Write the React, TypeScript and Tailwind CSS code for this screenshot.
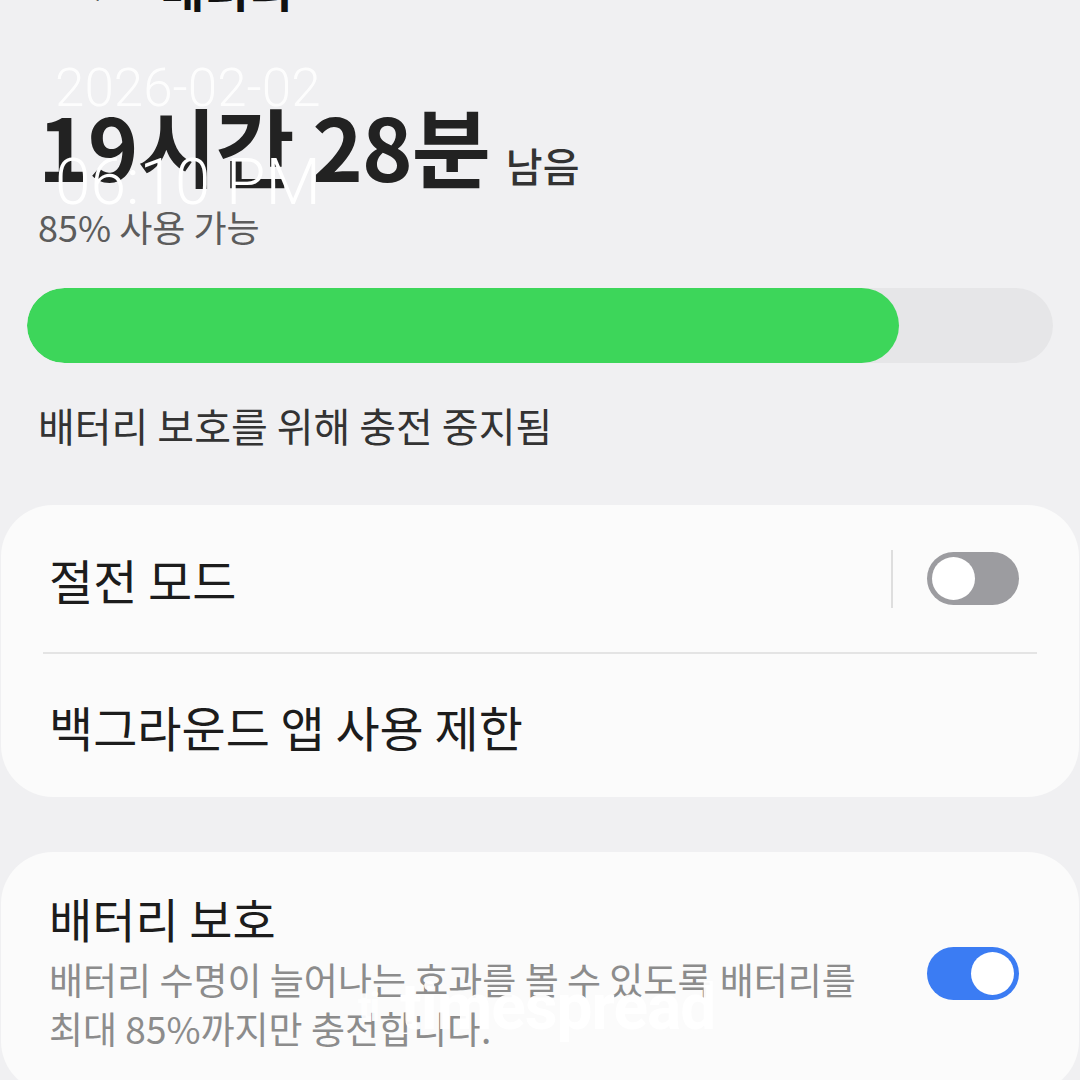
const KR = "font-['Noto_Sans_CJK_KR','Noto_Sans',sans-serif]";

function Toggle({ on }: { on: boolean }) {
  return (
    <div
      className={
        "w-[92px] h-[53px] rounded-full flex items-center px-[5px] " +
        (on ? "bg-[#3b7cf3] justify-end" : "bg-[#9c9ca0] justify-start")
      }
    >
      <div className="w-[43px] h-[43px] rounded-full bg-white" />
    </div>
  );
}

export default function App() {
  return (
    <div className={`relative w-[1080px] h-[1080px] overflow-hidden bg-[#f0f0f2] ${KR}`}>
      {/* header, mostly scrolled off the top */}
      <div className="-mt-[52px] h-[62px] flex items-end pl-[72px] gap-[60px] text-[48px] leading-none text-[#111]">
        <span className="font-bold">&lt;</span>
        <span className="font-bold">배터리</span>
      </div>

      <div className="px-[38px] pt-[92px]">
        <div className="flex items-baseline gap-[16px]">
          <span className="text-[86px] font-bold leading-none tracking-[-1px] text-[#222]">19시간 28분</span>
          <span className="text-[40px] font-medium leading-none text-[#333]">남음</span>
        </div>
        <div className="mt-[20px] text-[36px] leading-none text-[#5c5c5c]">85% 사용 가능</div>
      </div>

      <div className="mx-[27px] mt-[44px] h-[75px] rounded-full bg-[#e6e6e8] overflow-hidden">
        <div className="h-full w-[85%] rounded-full bg-[#3dd65a]" />
      </div>

      <div className="px-[38px] mt-[42px] text-[40px] leading-none text-[#333]">배터리 보호를 위해 충전 중지됨</div>

      <div className="mt-[60px] mx-[1px] rounded-[52px] bg-[#fbfbfb]">
        <div className="flex items-center h-[147px] pl-[48px] pr-[60px]">
          <span className="flex-1 text-[48px] leading-none text-[#1c1c1c]">절전 모드</span>
          <div className="w-[2px] h-[58px] bg-[#dedede] mr-[34px]" />
          <Toggle on={false} />
        </div>
        <div className="mx-[42px] h-[2px] bg-[#e4e4e4]" />
        <div className="flex items-center h-[143px] pl-[48px]">
          <span className="text-[48px] leading-none text-[#1c1c1c]">백그라운드 앱 사용 제한</span>
        </div>
      </div>

      <div className="mt-[55px] mx-[1px] rounded-[52px] bg-[#fbfbfb] flex items-center pl-[48px] pr-[60px] pt-[42px] pb-[40px]">
        <div className="flex-1">
          <div className="text-[47px] leading-none text-[#1c1c1c]">배터리 보호</div>
          <div className="mt-[14px] text-[37px] leading-[49px] text-[#8c8c8c] w-[830px]">
            배터리 수명이 늘어나는 효과를 볼 수 있도록 배터리를 최대 85%까지만 충전합니다.
          </div>
        </div>
        <Toggle on={true} />
      </div>

      {/* timestamp overlay */}
      <div className="absolute left-[55px] top-[62px] font-['Roboto',sans-serif] font-light text-white leading-none">
        <div className="text-[53px] opacity-90">2026-02-02</div>
        <div className="mt-[36px] text-[64px]">06:10 PM</div>
      </div>

      {/* watermark */}
      <div className="absolute left-[358px] top-[976px] flex items-center gap-[22px] text-white/95 font-['Roboto',sans-serif] font-bold leading-none">
        <span className="text-[40px] tracking-[-2px]">ti</span>
        <span className="text-[64px] tracking-[-1px]">timespread</span>
      </div>
    </div>
  );
}
